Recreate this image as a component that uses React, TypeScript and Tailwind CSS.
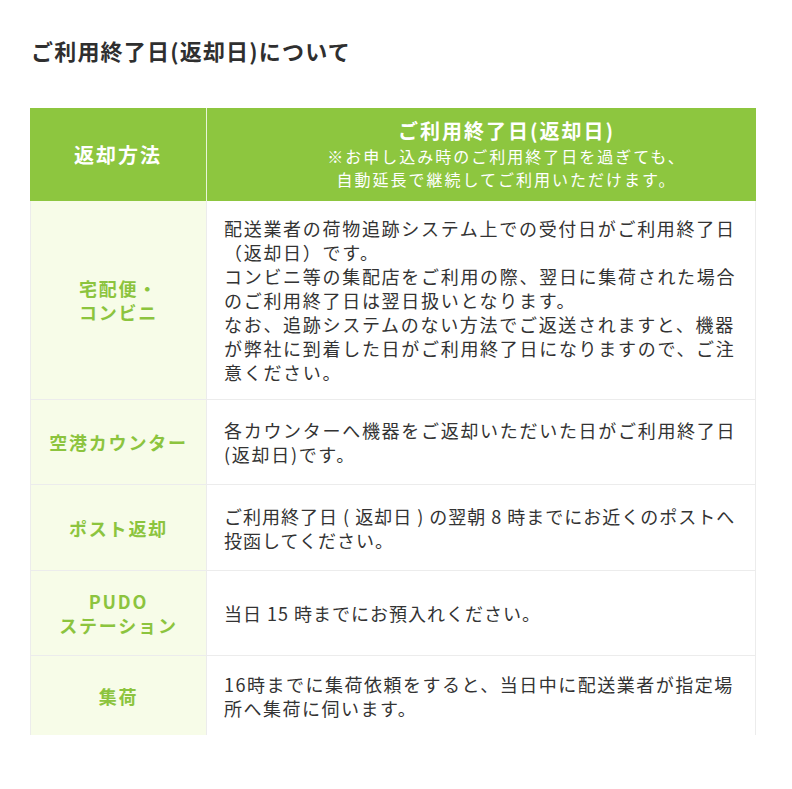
const font = { fontFamily: '"Noto Sans CJK JP", "Noto Sans", sans-serif' };

type Row = {
  label: string[];
  lines: string[];
  h: string;
  track: string;
};

const rows: Row[] = [
  {
    label: ["宅配便・", "コンビニ"],
    lines: [
      "配送業者の荷物追跡システム上での受付日がご利用終了日",
      "（返却日）です。",
      "コンビニ等の集配店をご利用の際、翌日に集荷された場合",
      "のご利用終了日は翌日扱いとなります。",
      "なお、追跡システムのない方法でご返送されますと、機器",
      "が弊社に到着した日がご利用終了日になりますので、ご注",
      "意ください。",
    ],
    h: "h-[199px]",
    track: "tracking-[1.7px]",
  },
  {
    label: ["空港カウンター"],
    lines: ["各カウンターへ機器をご返却いただいた日がご利用終了日", "(返却日)です。"],
    h: "h-[85px]",
    track: "tracking-[1.7px]",
  },
  {
    label: ["ポスト返却"],
    lines: ["ご利用終了日 ( 返却日 ) の翌朝 8 時までにお近くのポストへ", "投函してください。"],
    h: "h-[86px]",
    track: "tracking-[1px]",
  },
  {
    label: ["PUDO", "ステーション"],
    lines: ["当日 15 時までにお預入れください。"],
    h: "h-[85px]",
    track: "tracking-[1px]",
  },
  {
    label: ["集荷"],
    lines: ["16時までに集荷依頼をすると、当日中に配送業者が指定場", "所へ集荷に伺います。"],
    h: "h-[79px]",
    track: "tracking-[1.5px]",
  },
];

export default function App() {
  return (
    <div className="min-h-[789px] w-[792px] bg-white" style={font}>
      <h2 className="pl-[31px] pt-[36px] text-[22px] font-bold leading-[28px] tracking-[1.2px] text-[#2f2f2f]">
        ご利用終了日(返却日)について
      </h2>

      <div className="ml-[30px] mt-[44px] w-[726px]">
        {/* header */}
        <div className="grid h-[93px] grid-cols-[177px_1fr] bg-[#8dc63f] text-white">
          <div className="flex items-center justify-center border-r border-white/80 text-[20px] font-bold tracking-[2px]">
            返却方法
          </div>
          <div className="flex flex-col items-center justify-center pl-[50px] text-center">
            <div className="text-[20px] font-bold leading-[26px] tracking-[2px]">ご利用終了日(返却日)</div>
            <div className="mt-[1px] text-[16px] leading-[23px] tracking-[2px]">
              ※お申し込み時のご利用終了日を過ぎても、
              <br />
              自動延長で継続してご利用いただけます。
            </div>
          </div>
        </div>

        {/* body */}
        {rows.map((row, i) => (
          <div
            key={i}
            className={`grid grid-cols-[177px_1fr] border-r border-[#ececec] ${row.h} ${
              i < rows.length - 1 ? "border-b" : ""
            }`}
          >
            <div className="flex flex-col items-center justify-center border-l border-r border-[#ececec] bg-[#f7fce8] text-center text-[18px] font-bold leading-[24px] tracking-[1.8px] text-[#8cc43e]">
              {row.label.map((l) => (
                <span key={l}>{l}</span>
              ))}
            </div>
            <div
              className={`flex flex-col justify-center whitespace-nowrap pl-[17px] text-[18px] leading-[24px] text-[#333333] ${row.track}`}
            >
              {row.lines.map((l) => (
                <span key={l}>{l}</span>
              ))}
            </div>
          </div>
        ))}
      </div>
    </div>
  );
}
